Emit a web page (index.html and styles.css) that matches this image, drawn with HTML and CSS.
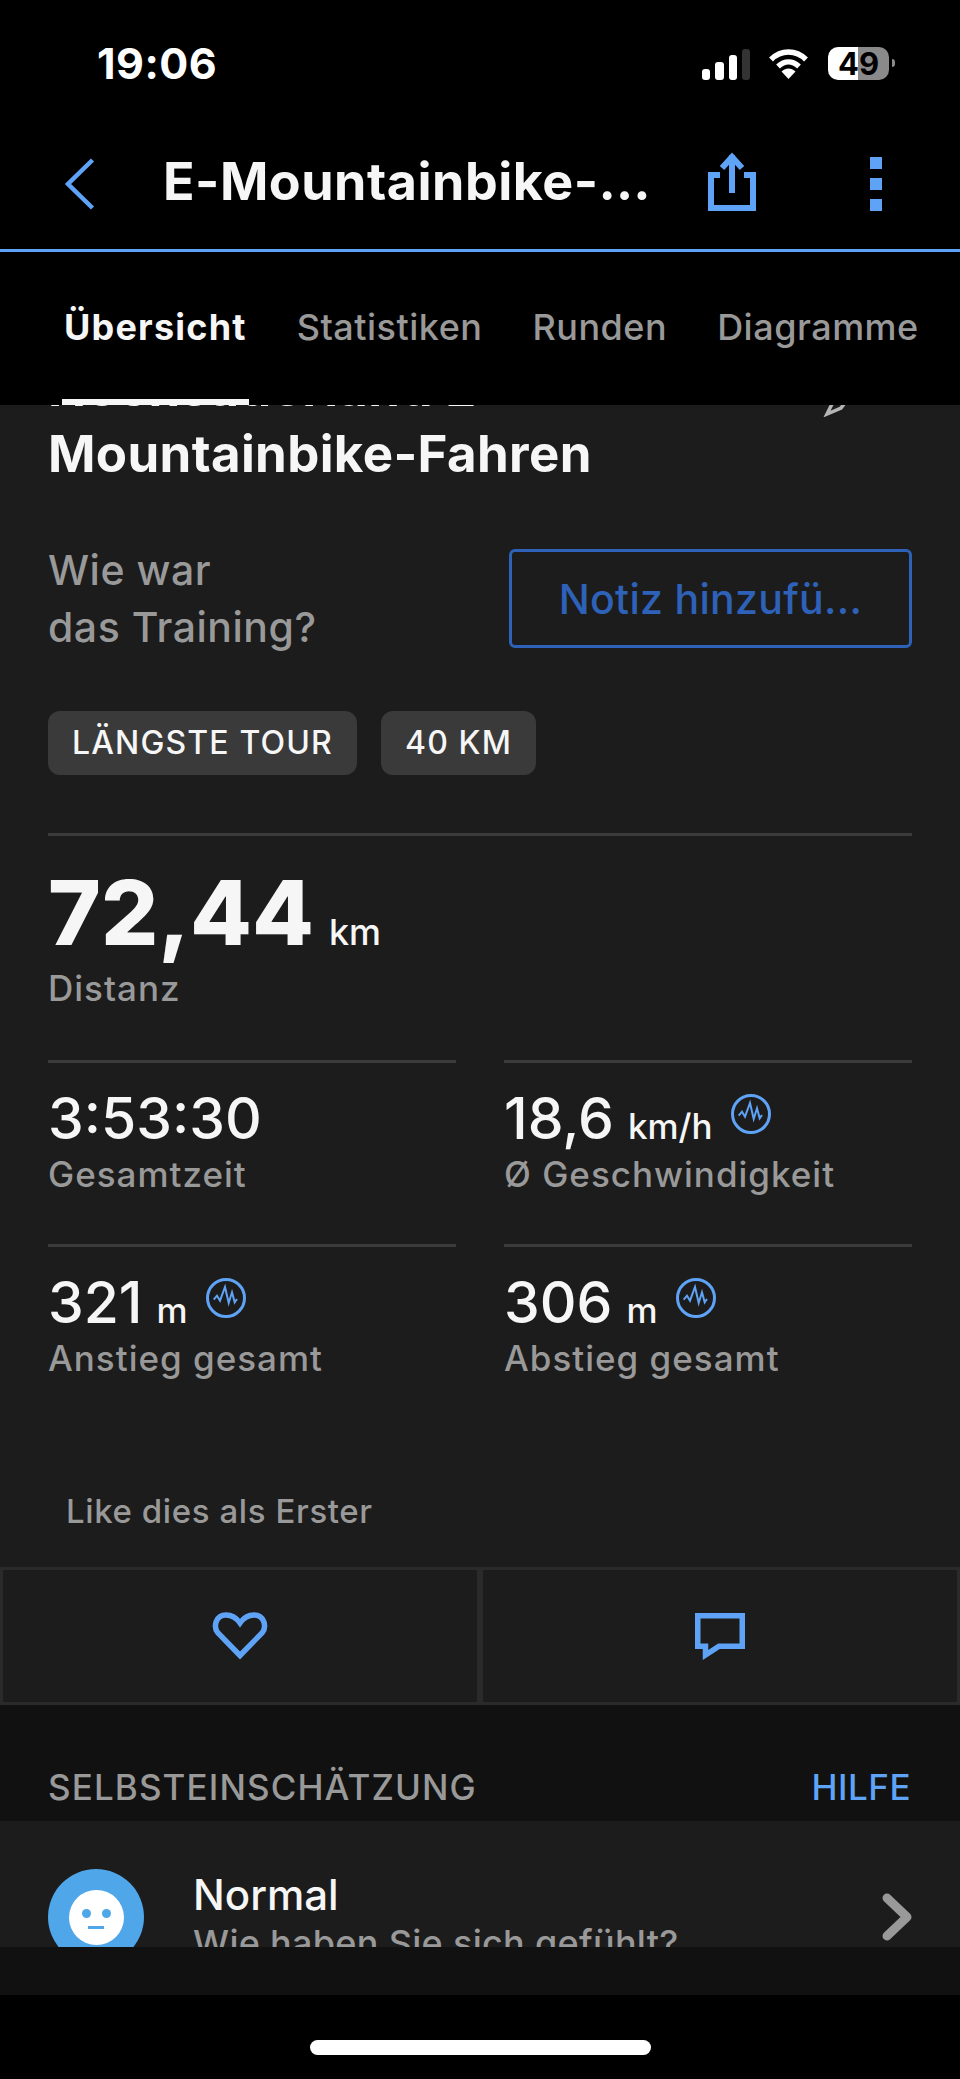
FILE: index.html
```html
<!DOCTYPE html>
<html lang="de">
<head>
<meta charset="utf-8">
<title>E-Mountainbike-Fahren</title>
<link rel="stylesheet" href="styles.css">
</head>
<body>
<svg class="defs" width="0" height="0" aria-hidden="true">
  <symbol id="pulse" viewBox="0 0 40 40">
    <circle cx="20" cy="20" r="18.5" fill="none" stroke="currentColor" stroke-width="3"/>
    <path d="M7.7 21.7 11 17.7 14 22.7 19 9 22.7 25 26 14.3 28.7 24.3 31 21" fill="none" stroke="currentColor" stroke-width="2"/>
  </symbol>
</svg>
<div class="phone">
  <header class="status">
    <span class="time">19:06</span>
    <div class="status-icons">
      <div class="signal">
        <span class="bar bar-1"></span><span class="bar bar-2"></span><span class="bar bar-3"></span><span class="bar bar-4"></span>
      </div>
      <svg class="wifi" width="41" height="31" viewBox="0 0 41 31">
        <path d="M3 11.5C13 1.5 28 1.5 38 11.5" fill="none" stroke="#fff" stroke-width="5.5"/>
        <path d="M10 18.5C16.5 12.5 24.5 12.5 31 18.5" fill="none" stroke="#fff" stroke-width="5.5"/>
        <path d="M13.5 23.5C18 19.5 23 19.5 27.5 23.5L20.5 31Z" fill="#fff"/>
      </svg>
      <div class="battery"><span class="battery-num">49</span></div>
      <span class="battery-nub"></span>
    </div>
  </header>
  <nav class="nav">
    <svg class="back" width="30" height="52" viewBox="0 0 30 52"><path d="M27.5 2 3 26 27.5 50" fill="none" stroke="#5ea3f5" stroke-width="4.5"/></svg>
    <h2 class="nav-title">E-Mountainbike-…</h2>
    <svg class="share" width="48" height="60" viewBox="0 0 48 60">
      <path d="M12 24H3V57H45V24H36" fill="none" stroke="#5ea3f5" stroke-width="6"/>
      <path d="M24 42V4" fill="none" stroke="#5ea3f5" stroke-width="6"/>
      <path d="M14 17 24 6 34 17" fill="none" stroke="#5ea3f5" stroke-width="6"/>
    </svg>
    <div class="dots"><span class="dot"></span><span class="dot"></span><span class="dot"></span></div>
  </nav>
  <div class="nav-rule"></div>
  <div class="tabs">
    <span class="tab tab-active">Übersicht</span>
    <span class="tab">Statistiken</span>
    <span class="tab">Runden</span>
    <span class="tab">Diagramme</span>
  </div>
  <main class="scroll">
    <section class="card">
      <div class="title-row">
        <h1 class="title">Hochsauerland E-<br>Mountainbike-Fahren</h1>
        <svg class="pencil" width="24" height="60" viewBox="0 0 24 60"><path d="M4 57 10 45 24 43 18 51Z" fill="none" stroke="#b5b5b5" stroke-width="3.5"/></svg>
      </div>
      <div class="note-row">
        <p class="question">Wie war<br>das Training?</p>
        <div class="note-btn">Notiz hinzufü...</div>
      </div>
      <div class="chips">
        <span class="chip">LÄNGSTE TOUR</span>
        <span class="chip">40 KM</span>
      </div>
      <div class="stats">
        <div class="stat stat-wide">
          <div class="value-big">72,44<span class="unit-big">km</span></div>
          <div class="label label-big">Distanz</div>
        </div>
        <div class="stat">
          <div class="value">3:53:30</div>
          <div class="label">Gesamtzeit</div>
        </div>
        <div class="stat">
          <div class="value">18,6<span class="unit">km/h</span><svg class="pulse" width="40" height="40"><use href="#pulse"/></svg></div>
          <div class="label">Ø Geschwindigkeit</div>
        </div>
        <div class="stat">
          <div class="value">321<span class="unit">m</span><svg class="pulse" width="40" height="40"><use href="#pulse"/></svg></div>
          <div class="label">Anstieg gesamt</div>
        </div>
        <div class="stat">
          <div class="value">306<span class="unit">m</span><svg class="pulse" width="40" height="40"><use href="#pulse"/></svg></div>
          <div class="label">Abstieg gesamt</div>
        </div>
      </div>
      <p class="likes">Like dies als Erster</p>
    </section>
    <div class="actions">
      <div class="action">
        <svg width="56" height="48" viewBox="0 0 56 48"><path d="M28 43.5 6 21C1 15 3.500 3 14 3 20 3 24.500 6 28 11 31.500 6 36 3 42 3 52.500 3 55 15 50 21Z" fill="none" stroke="#5ea3f5" stroke-width="5.500"/></svg>
      </div>
      <div class="action">
        <svg width="50" height="47" viewBox="0 0 50 47"><path d="M2.750 2.750H47.250V33.250H24L10.500 42V33.250H2.750Z" fill="none" stroke="#5ea3f5" stroke-width="5.500"/></svg>
      </div>
    </div>
    <div class="section-head">
      <span class="section-label">SELBSTEINSCHÄTZUNG</span>
      <span class="section-link">HILFE</span>
    </div>
    <section class="row">
      <div class="avatar">
        <div class="face">
          <span class="eye"></span><span class="eye"></span>
          <span class="mouth"></span>
        </div>
      </div>
      <div class="row-text">
        <div class="row-title">Normal</div>
        <div class="row-sub">Wie haben Sie sich gefühlt?</div>
      </div>
      <svg class="row-chevron" width="30" height="48" viewBox="0 0 30 48"><path d="M5 5 25 24 5 43" fill="none" stroke="#999" stroke-width="9" stroke-linecap="round" stroke-linejoin="round"/></svg>
    </section>
  </main>
  <div class="bottom-strip"></div>
  <footer class="home"><span class="home-bar"></span></footer>
</div>
</body>
</html>
```

FILE: styles.css
```css
* { box-sizing: border-box; }
html, body { margin: 0; padding: 0; background: #000; }
body { font-family: Inter, "Noto Sans", "Liberation Sans", sans-serif; color: #f6f6f6; }
.defs { position: absolute; }
h1, h2, p { margin: 0; }
.phone { width: 960px; height: 2079px; display: flex; flex-direction: column; overflow: hidden; background: #000; }

.status { height: 118px; padding: 47px 0 0 97px; display: flex; justify-content: space-between; flex: none; }
.time { font-size: 43px; line-height: 33px; font-weight: 700; letter-spacing: 0.5px; color: #fff; }
.status-icons { display: flex; align-items: flex-start; padding-right: 65px; }
.signal { display: flex; align-items: flex-end; gap: 5px; height: 33px; padding-top: 1px; width: 48px; }
.bar { width: 9px; border-radius: 3px; background: #fff; }
.bar-1 { height: 11px; }
.bar-2 { height: 18px; }
.bar-3 { height: 25px; }
.bar-4 { height: 31px; background: #333; }
.wifi { margin: 1px 0 0 18px; }
.battery { width: 61px; height: 33px; margin-left: 19px; border-radius: 10px; background: linear-gradient(90deg, #fff 0 30px, #8a8a8a 30px); display: flex; align-items: center; justify-content: center; }
.battery-num { font-size: 31px; font-weight: 700; line-height: 33px; color: #000; }
.battery-nub { width: 3px; height: 8px; margin: 12px 0 0 3px; border-radius: 0 3px 3px 0; background: #8a8a8a; }

.nav { height: 131px; display: flex; align-items: center; padding: 0 78px 0 65px; flex: none; }
.nav-title { flex: 1; margin-left: 68px; padding-bottom: 4px; font-size: 52px; font-weight: 700; line-height: 60px; letter-spacing: 0.5px; white-space: nowrap; color: #f6f6f6; }
.share { margin-top: -6px; }
.dots { display: flex; flex-direction: column; gap: 9px; margin-left: 114px; }
.dot { width: 12px; height: 12px; background: #5ea3f5; }
.nav-rule { height: 3px; background: #5ea3f5; flex: none; }

.tabs { height: 153px; display: flex; gap: 46px; padding-left: 62px; flex: none; }
.tab { padding: 53px 2px 0; border-bottom: 6px solid transparent; font-size: 36px; line-height: 44px; font-weight: 500; letter-spacing: 0.5px; color: #999; white-space: nowrap; }
.tab-active { color: #f6f6f6; font-weight: 700; letter-spacing: 1.2px; border-bottom-color: #f6f6f6; }

.scroll { height: 1542px; overflow: hidden; background: #111; flex: none; }
.card { background: #1c1c1c; padding: 0 48px 36px; overflow: hidden; }
.title-row { display: flex; justify-content: space-between; margin-top: -50px; }
.title { font-size: 51px; line-height: 66px; font-weight: 700; letter-spacing: 0.35px; color: #f6f6f6; }
.pencil { margin: 2px 65px 0 0; }
.note-row { display: flex; justify-content: space-between; align-items: flex-start; margin-top: 54px; }
.question { padding-top: 1px; font-size: 41px; line-height: 57px; letter-spacing: 0.5px; color: #999; font-weight: 500; }
.note-btn { width: 403px; height: 99px; margin-top: 8px; border: 3px solid #2d62b8; border-radius: 6px; display: flex; align-items: center; justify-content: center; font-size: 41px; font-weight: 500; letter-spacing: 0.3px; color: #2e62b8; }
.chips { display: flex; gap: 24px; margin-top: 55px; }
.chip { height: 64px; padding: 0 24px 2px; border-radius: 12px; background: #3a3a3a; display: flex; align-items: center; font-size: 32px; font-weight: 500; letter-spacing: 1.15px; color: #f6f6f6; }
.stats { display: grid; grid-template-columns: 408px 408px; column-gap: 48px; margin-top: 58px; }
.stat { border-top: 3px solid #3a3a3a; padding: 22px 0 48px; }
.stat-wide { grid-column: 1 / 3; padding: 27px 0 50px; }
.value-big { font-size: 90px; line-height: 100px; font-weight: 800; display: flex; align-items: baseline; }
.unit-big { font-size: 36px; line-height: 1; font-weight: 500; margin-left: 15px; }
.value { font-size: 57px; line-height: 67px; font-weight: 500; display: flex; align-items: baseline; }
.unit { font-size: 35px; line-height: 1; font-weight: 500; margin-left: 14px; }
.pulse { align-self: flex-start; margin: 9px 0 0 18px; color: #5ea3f5; }
.label { font-size: 35px; line-height: 44px; font-weight: 500; letter-spacing: 1px; color: #999; }
.label-big { margin-top: 3px; }
.likes { margin: 63px 0 0 18px; font-size: 33px; line-height: 40px; font-weight: 500; letter-spacing: 0.6px; color: #999; }

.actions { display: grid; grid-template-columns: 1fr 1fr; gap: 6px; padding: 3px; background: #2a2a2a; }
.action { height: 132px; background: #1c1c1c; display: flex; align-items: center; justify-content: center; }

.section-head { display: flex; justify-content: space-between; padding: 60px 49px 12px 48px; background: #111; }
.section-label { font-size: 35px; line-height: 44px; font-weight: 500; letter-spacing: 1.1px; color: #999; }
.section-link { font-size: 35px; line-height: 44px; font-weight: 500; letter-spacing: 0.5px; color: #5ea3f5; }

.row { display: flex; align-items: flex-start; padding: 48px 48px 0; height: 200px; background: #1c1c1c; }
.avatar { width: 96px; height: 96px; border-radius: 50%; background: #4fa6e8; display: flex; align-items: center; justify-content: center; flex: none; }
.face { width: 55px; height: 55px; border-radius: 50%; background: #fff; display: flex; flex-wrap: wrap; justify-content: center; align-content: flex-start; column-gap: 11px; padding-top: 19px; }
.eye { width: 9px; height: 9px; border-radius: 50%; background: #4fa6e8; }
.mouth { width: 16px; height: 3px; margin-top: 8px; background: #4fa6e8; }
.row-text { margin: 1px 0 0 49px; }
.row-title { font-size: 42px; line-height: 50px; font-weight: 500; color: #f6f6f6; }
.row-sub { font-size: 36px; line-height: 44px; font-weight: 500; letter-spacing: 0.3px; color: #999; margin-top: 1px; white-space: nowrap; }
.row-chevron { margin: 24px 0 0 auto; }

.bottom-strip { height: 48px; background: #111; flex: none; }
.home { flex: 1; display: flex; justify-content: center; padding-top: 45px; }
.home-bar { width: 341px; height: 15px; border-radius: 8px; background: #fff; }
```
